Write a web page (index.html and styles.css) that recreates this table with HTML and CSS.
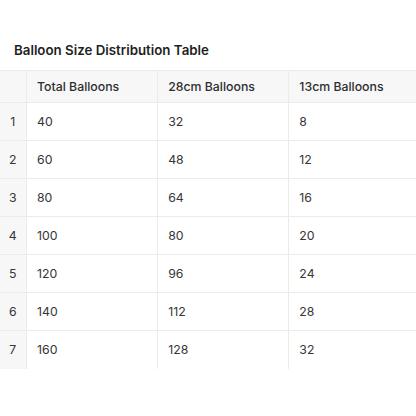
FILE: index.html
```html
<!DOCTYPE html>
<html>
<head>
<meta charset="utf-8">
<link rel="stylesheet" href="styles.css">
</head>
<body>
<div class="page">
  <h1 class="title">Balloon Size Distribution Table</h1>
  <table class="grid">
    <thead>
      <tr><th class="idx"></th><th>Total Balloons</th><th>28cm Balloons</th><th>13cm Balloons</th></tr>
    </thead>
    <tbody>
      <tr><td class="idx">1</td><td>40</td><td>32</td><td>8</td></tr>
      <tr><td class="idx">2</td><td>60</td><td>48</td><td>12</td></tr>
      <tr><td class="idx">3</td><td>80</td><td>64</td><td>16</td></tr>
      <tr><td class="idx">4</td><td>100</td><td>80</td><td>20</td></tr>
      <tr><td class="idx">5</td><td>120</td><td>96</td><td>24</td></tr>
      <tr><td class="idx">6</td><td>140</td><td>112</td><td>28</td></tr>
      <tr><td class="idx">7</td><td>160</td><td>128</td><td>32</td></tr>
    </tbody>
  </table>
</div>
</body>
</html>
```
FILE: styles.css
```css
html, body {
  margin: 0;
  padding: 0;
  background: #ffffff;
  overflow: hidden;
}
.page {
  width: 416px;
  height: 416px;
  overflow: hidden;
  font-family: Inter, "Noto Sans", sans-serif;
  color: #37352f;
}
.title {
  margin: 0;
  padding: 40px 0 0 14px;
  height: 30px;
  box-sizing: content-box;
  font-size: 13.3px;
  font-weight: 600;
  line-height: 20px;
  color: #1f1f1f;
}
.grid {
  border-collapse: collapse;
  table-layout: fixed;
  width: 420px;
  font-size: 12.3px;
}
.grid th, .grid td {
  border: 1px solid #ebebea;
  text-align: left;
  padding: 0 10.5px;
  font-weight: 400;
  white-space: nowrap;
}
.grid th {
  background: #f7f7f7;
  height: 32px;
  font-weight: 500;
  color: #2f2f2f;
}
.grid td {
  height: 38px;
  color: #363636;
}
.grid tr > :first-child {
  border-left: none;
}
.grid thead tr:first-child > * {
  border-top: 1px solid #ebebea;
}
.grid tbody tr:last-child td {
  border-bottom: none;
}
.grid .idx {
  width: 26px;
  box-sizing: border-box;
  padding: 0;
  text-align: center;
  background: #f7f7f7;
}
.grid th:not(.idx), .grid td:not(.idx) {
  width: 131px;
  box-sizing: border-box;
}
```
